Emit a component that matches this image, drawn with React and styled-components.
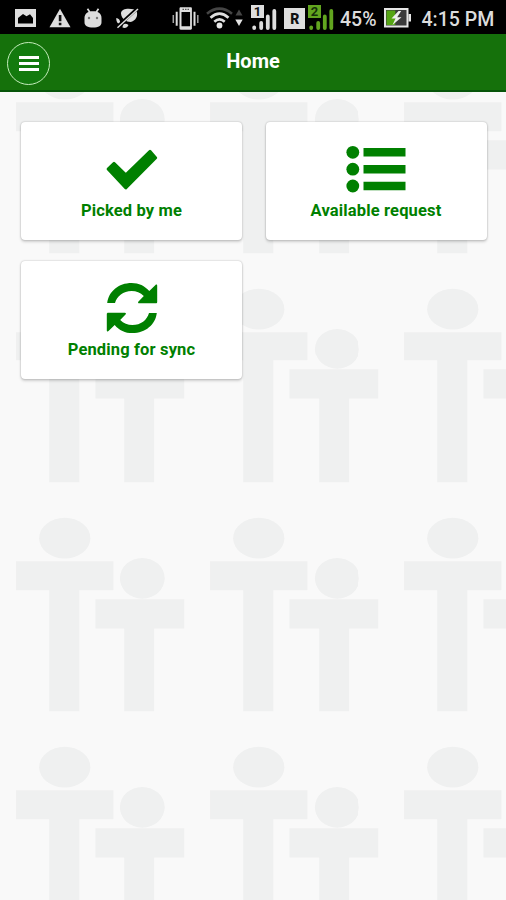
import React from "react";
import styled, { createGlobalStyle } from "styled-components";

const GlobalStyle = createGlobalStyle`
  * {
    box-sizing: border-box;
  }
  body {
    margin: 0;
    background: #f9f9f9;
    font-family: Roboto, "Liberation Sans", sans-serif;
  }
`;

// one repeat of the people wallpaper
const PEOPLE_TILE = `<svg xmlns="http://www.w3.org/2000/svg" width="194.2" height="229.2" viewBox="0 0 194.2 229.2"><g fill="#eff0f0"><ellipse cx="64.5" cy="38" rx="25.5" ry="20.3"/><path d="M16 61h97v29H79v121.5H49V90H16z"/><ellipse cx="142.7" cy="78" rx="22.3" ry="20.3"/><path d="M95 99h89.5v29H154.5v83.5H124.7V128H95z"/></g></svg>`;

const PictureIcon = () => (
  <svg width="21" height="18" viewBox="0 0 21 18">
    <path
      fill="#dedede"
      fillRule="evenodd"
      d="M0 0h21v18H0zM3 14.5h15V9l-3-3.8-3.5 2L8 5 3 9z"
    />
  </svg>
);

const WarningIcon = () => (
  <svg width="22" height="20" viewBox="0 0 22 20">
    <path d="M11 .8 21.5 19.3H.5z" fill="#dedede" />
    <path d="M9.8 7h2.6v6.2H9.8zM9.8 14.8h2.6v2.4H9.8z" fill="#111" />
  </svg>
);

const DroidIcon = () => (
  <svg width="18" height="20" viewBox="0 0 18 20">
    <path d="M3.5.8 6 4.5M14.5.8 12 4.5" stroke="#dedede" strokeWidth="1.7" />
    <path
      fill="#dedede"
      d="M.5 10c0-4 3-6.7 8.500-6.700s8.500 2.700 8.500 6.700v4c0 4-3 5.500-8.500 5.500S.5 18 .5 14z"
    />
    <circle cx="5" cy="10" r="1.2" fill="#777" />
    <circle cx="13" cy="10" r="1.2" fill="#777" />
  </svg>
);

const MutedIcon = () => (
  <svg width="23" height="21" viewBox="0 0 23 21">
    <path
      fill="#dedede"
      d="M5 5.500C5 2 9 .8 12.500.8c4 0 6.500.7 8 2.200 2 5-1 10-6 11-4 0-9-3-9.500-8.500zM.3 10c2 .3 4.500 2 3.800 6C1.500 16 0 13 .3 10zM6.500 19.500c0-4 3-5 6-2.500-1 2.500-3.500 3.500-6 2.500z"
    />
    <path d="M.5 19.5 21 .8" stroke="#000" strokeWidth="3.2" />
    <path d="M1.5 19.8 22 1" stroke="#dedede" strokeWidth="1.5" />
  </svg>
);

const VibrateIcon = () => (
  <svg width="27" height="23" viewBox="0 0 27 23">
    <path
      fill="#dedede"
      fillRule="evenodd"
      d="M7.500 1.500c0-.8.500-1.200 1.200-1.200h10c.7 0 1.200.4 1.200 1.200v20c0 .7-.5 1.200-1.200 1.200h-10c-.7 0-1.200-.5-1.200-1.200zM9.500 5v14.300h8.600V5z"
    />
    <path d="M10.5 2.3h6.7" stroke="#555" strokeWidth="1.2" strokeDasharray="1.5 1" />
    <path d="M4.7 4.8v14M22.5 4.8v14" stroke="#dedede" strokeWidth="2" />
    <path d="M1.3 8v8M25.8 8v8" stroke="#a5a5a5" strokeWidth="1.5" />
  </svg>
);

const WifiIcon = () => (
  <svg width="27" height="22" viewBox="0 0 27 22">
    <g fill="none" strokeWidth="2.7">
      <path d="M1 6.7Q13.5-3.3 26 6.7" stroke="#454545" />
      <path d="M4.5 10.7q9-8 18 0" stroke="#dedede" />
      <path d="M8.3 14.7q5.2-4.5 10.4 0" stroke="#dedede" />
    </g>
    <circle cx="13.5" cy="18.5" r="2.9" fill="#e8e8e8" />
  </svg>
);

const TrafficIcon = () => (
  <svg width="8" height="18" viewBox="0 0 8 18">
    <path d="m4 .5 3.5 6h-7z" fill="#454545" />
    <path d="M.3 10.5h7.4L4 17z" fill="#e4e4e4" />
  </svg>
);

// signal bars with the sim number in the top left corner
const SimIcon = ({ sim, color, ink }) => (
  <svg width="26" height="26" viewBox="0 0 26 26">
    <path d="M0 0h13v13H0z" fill={color} />
    <text
      x="6.5"
      y="11.2"
      fill={ink}
      fontSize="13"
      fontWeight="700"
      textAnchor="middle"
      fontFamily="Roboto, sans-serif"
    >
      {sim}
    </text>
    <g stroke={color} strokeWidth="3.8" strokeLinecap="round">
      <path d="M3.2 22.3v.8M10.2 18v5.1M16.8 11.5v11.600M23.300 6v17.100" />
    </g>
  </svg>
);

const RoamingIcon = () => (
  <svg width="21" height="21" viewBox="0 0 21 21">
    <path d="M0 0h21v21H0z" fill="#dedede" />
    <text
      x="10.7"
      y="15.5"
      fill="#111"
      fontSize="14"
      fontWeight="900"
      textAnchor="middle"
      fontFamily="Roboto, sans-serif"
    >
      R
    </text>
  </svg>
);

const BatteryIcon = () => (
  <svg width="27" height="20" viewBox="0 0 27 20">
    <path d="M1 1h22.5v17.5H1z" fill="#3b3b3b" stroke="#e6e6e6" strokeWidth="2" />
    <path d="M24.5 6H27v7.5h-2.5z" fill="#e6e6e6" />
    <path d="M2.5 2.5h8.800v14.500H2.500z" fill="#55a414" />
    <path d="m14.5 3-7 7.500h4L8.500 17l9-7.800h-4.300l4-6.200z" fill="#eee" />
  </svg>
);

const CheckIcon = () => (
  <svg width="52" height="52" viewBox="0 0 52 52">
    <path
      d="M2 26 8 20.2 19.8 31.8 44 8.2 49.8 14.8 19.8 45z"
      fill="green"
      stroke="green"
      strokeWidth="2.8"
      strokeLinejoin="round"
    />
  </svg>
);

const ListIcon = () => (
  <svg width="60" height="52" viewBox="0 0 60 52">
    <g fill="green">
      <circle cx="6.8" cy="9.3" r="6.4" />
      <circle cx="6.8" cy="26.2" r="6.4" />
      <circle cx="6.8" cy="43" r="6.4" />
      <path d="M17.5 5h42v8.500h-42zM17.500 22h42v8.500h-42zM17.500 38.800h42v8.500h-42z" />
    </g>
  </svg>
);

// the lower arrow is the upper one turned half way round
const SYNC_ARROW =
  "M1.2 21C2.5 9.5 12.5.9 25.6.9c7.3 0 13.2 2.800 17.700 8.200l6.200-6.200c.8-.8 1.700-.4 1.700.7v16.300c0 .7-.5 1.300-1.300 1.300H33.200c-1.200 0-1.500-1-.7-1.800l5.300-5.400c-3.400-3.400-7.500-5.100-12.200-5.100-8.400 0-14.700 5.100-16.600 12.100z";

const SyncIcon = () => (
  <svg width="52" height="52" viewBox="0 0 52 52">
    <g fill="green">
      <path d={SYNC_ARROW} />
      <path d={SYNC_ARROW} transform="rotate(180 26 26)" />
    </g>
  </svg>
);

const CARDS = [
  { text: "Picked by me", icon: <CheckIcon /> },
  { text: "Available request", icon: <ListIcon /> },
  { text: "Pending for sync", icon: <SyncIcon /> },
];

const App = () => {
  return (
    <Screen>
      <GlobalStyle />
      <StatusBar>
        <StatusItem $left={15}><PictureIcon /></StatusItem>
        <StatusItem $left={12.5}><WarningIcon /></StatusItem>
        <StatusItem $left={13.5}><DroidIcon /></StatusItem>
        <StatusItem $left={13.5}><MutedIcon /></StatusItem>
        <StatusItem $left={33}><VibrateIcon /></StatusItem>
        <StatusItem $left={7}><WifiIcon /></StatusItem>
        <StatusItem $left={2}><TrafficIcon /></StatusItem>
        <StatusItem $left={8}>
          <SimIcon sim="1" color="#dedede" ink="#111" />
        </StatusItem>
        <StatusItem $left={7}><RoamingIcon /></StatusItem>
        <StatusItem $left={3.5}>
          <SimIcon sim="2" color="#62a51f" ink="#16300a" />
        </StatusItem>
        <StatusText $left={6}>45%</StatusText>
        <StatusItem $left={7}><BatteryIcon /></StatusItem>
        <StatusText $left={11}>4:15 PM</StatusText>
      </StatusBar>

      <Header>
        <MenuButton aria-label="Menu">
          <MenuLine />
          <MenuLine />
          <MenuLine />
        </MenuButton>
        <Title>Home</Title>
      </Header>

      <Content>
        {CARDS.map((card) => (
          <Card key={card.text}>
            <IconBox>{card.icon}</IconBox>
            <CardText>{card.text}</CardText>
          </Card>
        ))}
      </Content>
    </Screen>
  );
};

export default App;

const Screen = styled.div`
  display: flex;
  flex-direction: column;
  width: 506px;
  height: 900px;
  overflow: hidden;
`;

const StatusBar = styled.div`
  display: flex;
  align-items: center;
  flex: 0 0 34px;
  background: #000;
`;

const StatusItem = styled.div`
  display: flex;
  flex-shrink: 0;
  margin-left: ${(props) => props.$left}px;
  padding-top: 2px;
`;

const StatusText = styled.span`
  flex-shrink: 0;
  margin-left: ${(props) => props.$left}px;
  padding-top: 6px;
  color: #dcdcdc;
  font-size: 19.5px;
  font-weight: 500;
  line-height: 24px;
  white-space: nowrap;
`;

const Header = styled.header`
  display: grid;
  grid-template-columns: 50px 1fr 50px;
  align-items: center;
  flex: 0 0 58px;
  background: #15710b;
  border-bottom: 2px solid #07550a;
`;

const MenuButton = styled.button`
  display: flex;
  flex-direction: column;
  align-items: center;
  justify-content: center;
  gap: 3px;
  width: 43px;
  height: 43px;
  margin: 2px 0 0 7px;
  padding: 0;
  background: #137a0e;
  border: 1.5px solid #c4ecbb;
  border-radius: 50%;
  cursor: pointer;
`;

const MenuLine = styled.span`
  width: 20px;
  height: 3px;
  background: #fff;
`;

const Title = styled.h1`
  margin: -2px 0 0;
  color: #fff;
  font-size: 20px;
  font-weight: 700;
  line-height: 24px;
  text-align: center;
`;

const Content = styled.main`
  display: grid;
  grid-template-columns: 221px 221px;
  grid-auto-rows: 118px;
  align-content: start;
  gap: 21px 23.5px;
  flex: 1;
  padding: 30.4px 0 0 21px;
  background: #f9f9f9 url('data:image/svg+xml,${encodeURIComponent(PEOPLE_TILE)}') 0
    -50.4px / 194.2px 229.2px;
`;

const Card = styled.div`
  display: flex;
  flex-direction: column;
  align-items: center;
  padding-top: 21px;
  background: #fff;
  border-radius: 4px;
  box-shadow: 0 0 2px rgba(0, 0, 0, 0.28), 0 2px 3px rgba(0, 0, 0, 0.16);
`;

const IconBox = styled.div`
  display: flex;
  align-items: center;
  justify-content: center;
  height: 52px;
`;

const CardText = styled.span`
  margin-top: 5px;
  color: green;
  font-size: 16.5px;
  font-weight: 700;
  letter-spacing: 0.15px;
  line-height: 22px;
  white-space: nowrap;
`;
